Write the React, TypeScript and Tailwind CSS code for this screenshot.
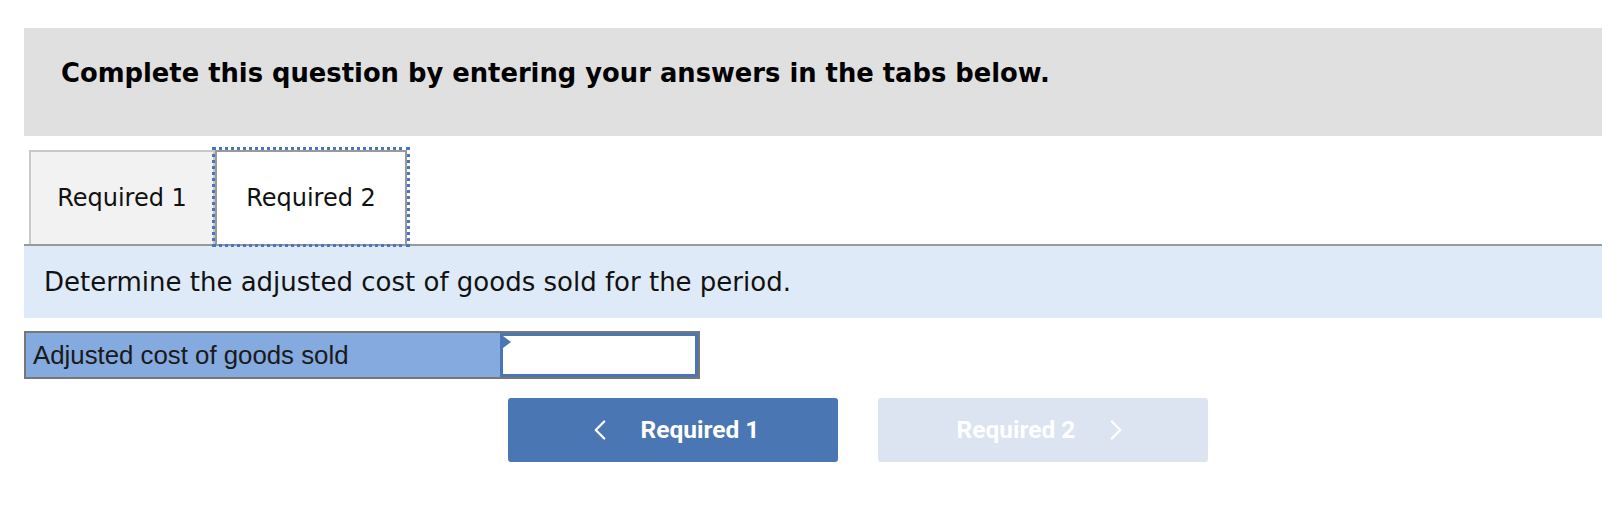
import { ChevronLeft, ChevronRight } from 'lucide-react';

const verdana = { fontFamily: '"DejaVu Sans", Verdana, sans-serif' };

export default function App() {
  return (
    <div className="w-[1602px] min-h-[506px] bg-white pt-[28px]" style={verdana}>
      <div className="ml-[24px] h-[108px] bg-[#e0e0e0] pl-[37px] pt-[29px]">
        <p className="text-[25.8px] leading-[32px] font-bold text-black">Complete this question by entering your answers in the tabs below.</p>
      </div>

      <div className="ml-[24px] mt-[14px] flex items-end border-b-2 border-[#999]">
        <div className="ml-[5px] flex h-[94px] w-[186px] items-center justify-center border-2 border-b-0 border-[#c8c8c8] bg-[#f2f2f2] text-[24px] text-[#111]">
          Required 1
        </div>
        <div className="flex h-[94px] w-[192px] items-center justify-center border-2 border-b-0 border-[#999] bg-white text-[24px] text-[#111] outline-[3px] outline-dotted outline-[#4a76c0]">
          Required 2
        </div>
      </div>

      <div className="ml-[24px] flex h-[72px] items-center bg-[#deeaf7] pl-[20px]">
        <p className="text-[26px] text-[#111]">Determine the adjusted cost of goods sold for the period.</p>
      </div>

      <div className="ml-[24px] mt-[13px] flex h-[48px] w-[676px] border-2 border-[#777]">
        <div className="flex w-[474px] items-center bg-[#84aadf] pl-[7px] text-[25.8px] text-[#1a1a1a]" style={{ fontFamily: '"Liberation Sans", Arial, sans-serif' }}>
          Adjusted cost of goods sold
        </div>
        <div className="relative flex-1 border-[3px] border-[#4a76b3] bg-white">
          <span className="absolute left-0 top-0 h-0 w-0 border-y-[6px] border-l-[8px] border-y-transparent border-l-[#4a76b3]" />
        </div>
      </div>

      <div className="ml-[508px] mt-[19px] flex gap-[40px]" style={{ fontFamily: 'Roboto, sans-serif' }}>
        <button className="flex h-[64px] w-[330px] items-center justify-center gap-[24px] rounded-[3px] bg-[#4a76b4] pr-[4px] text-[24.5px] font-bold text-white">
          <ChevronLeft size={34} strokeWidth={1.6} />
          <span>Required 1</span>
        </button>
        <button className="flex h-[64px] w-[330px] items-center justify-center gap-[24px] rounded-[3px] bg-[#dbe4f0] pl-[4px] text-[24.5px] font-bold text-white">
          <span>Required 2</span>
          <ChevronRight size={34} strokeWidth={1.6} />
        </button>
      </div>
    </div>
  );
}
